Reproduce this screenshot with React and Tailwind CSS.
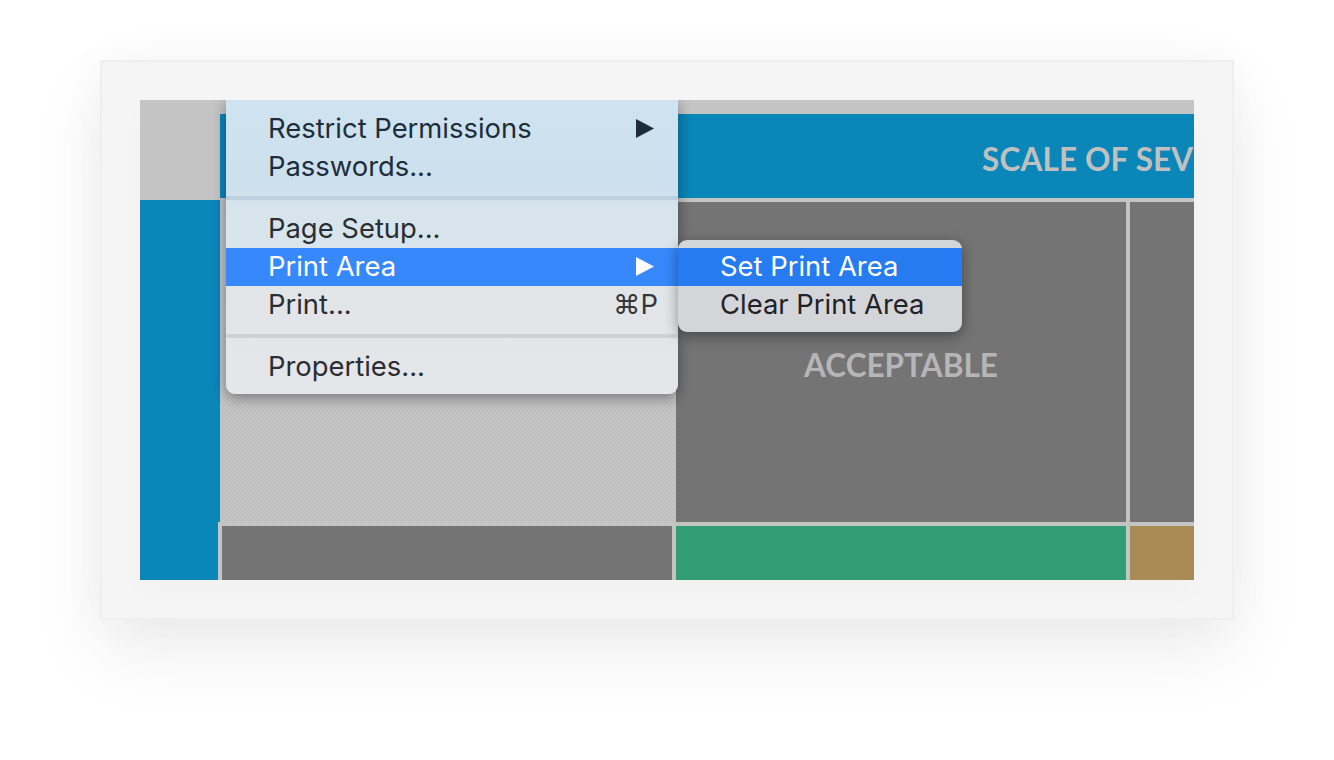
import React from 'react';

const MenuArrow = ({ className = 'text-[#1f2d3a]' }) => (
  <svg width="18" height="19" viewBox="0 0 18 19" className={className}>
    <path d="M0 0L18 9.5L0 19Z" fill="currentColor" />
  </svg>
);

const MenuRow = ({ label, arrow, shortcut, active, tone = 'pb-[2px]' }) => (
  <div className={`flex h-[38px] items-center justify-between pl-[42px] pr-[20px] ${active ? 'bg-[#3688fb] text-white' : ''} ${tone}`}>
    <span>{label}</span>
    {arrow && <span className="mr-[4px] flex"><MenuArrow className={active ? 'text-white' : 'text-[#1f2d3a]'} /></span>}
    {shortcut && <span className="text-[#33373b]">{shortcut}</span>}
  </div>
);

const App = () => {
  return (
    <div className="h-[760px] w-[1334px] overflow-hidden bg-white pl-[100px] pt-[60px] font-['Inter',sans-serif]">
      <div className="h-[560px] w-[1134px] border-2 border-[#efefef] bg-[#f5f5f5] pl-[38px] pt-[38px] shadow-[0_32px_70px_rgba(0,0,0,0.075),0_0_50px_rgba(0,0,0,0.03)]">
        <div className="relative flex h-[480px] w-[1054px] overflow-hidden bg-[#c4c4c4] font-['Lato',sans-serif] font-bold shadow-[0_12px_30px_rgba(0,0,0,0.02)]">
          <div className="flex w-[80px] shrink-0 flex-col">
            <div className="h-[100px] bg-[#c4c4c4]" />
            <div className="h-[322px] bg-[#0a86b9]" />
            <div className="h-[58px] w-[78px] bg-[#0a86b9]" />
          </div>

          <div className="flex min-w-0 flex-1 flex-col">
            <div className="h-[14px] shrink-0" />
            <div className="h-[84px] shrink-0 overflow-hidden whitespace-nowrap bg-[#0a86b9] pl-[762px] pt-[25px] text-[31.5px] leading-[40px] tracking-[0.15px] text-[#c0c0c0]">
              SCALE OF SEVERITY
            </div>

            <div className="flex h-[324px] shrink-0">
              <div className="mt-[2px] h-[322px] w-[456px] shrink-0 bg-[repeating-linear-gradient(45deg,#c9c9c9_0,#c9c9c9_1.414px,#bbbbbb_1.414px,#bbbbbb_2.828px)]" />
              <div className="mt-[4px] flex h-[320px] w-[450px] shrink-0 justify-center bg-[#747474] pt-[143px] text-[31.5px] leading-[40px] text-[#b6b6b6]">
                ACCEPTABLE
              </div>
              <div className="ml-[4px] mt-[4px] h-[320px] flex-1 bg-[#747474]" />
            </div>

            <div className="-ml-[2px] flex flex-1 gap-[4px] pl-[4px] pt-[4px]">
              <div className="w-[450px] bg-[#747474]" />
              <div className="w-[450px] bg-[#329c74]" />
              <div className="flex-1 bg-[#a98b55]" />
            </div>
          </div>

          <div className="absolute left-[86px] top-0 h-[294px] w-[452px] rounded-b-[9px] bg-[linear-gradient(180deg,#cee2ef_0%,#cce0ed_30%,#d7e4ec_36%,#d9e5ec_50%,#e2e5e8_65%,#e5e6e9_100%)] pt-[9px] font-['Inter',sans-serif] text-[27.4px] font-normal leading-[38px] text-[#2a2d31] shadow-[0_4px_14px_rgba(0,0,0,0.38)]">
            <MenuRow label="Restrict Permissions" arrow tone="text-[#1e2d3b]" />
            <MenuRow label="Passwords..." tone="text-[#1e2d3b]" />
            <div className="mb-[10px] mt-[11px] h-[4px] bg-[#bdd0dd]" />
            <MenuRow label="Page Setup..." />
            <MenuRow label="Print Area" arrow active />
            <MenuRow label="Print..." shortcut="⌘P" />
            <div className="mb-[10px] mt-[10px] h-[4px] bg-[#cfd1d4]" />
            <MenuRow label="Properties..." />

            <div className="absolute left-[452px] top-[140px] h-[92px] w-[284px] overflow-hidden rounded-[9px] bg-[#d4d5d8] pt-[8px] shadow-[0_4px_14px_rgba(0,0,0,0.38)]">
              <div className="flex h-[38px] items-center bg-[#267bf0] pb-[2px] pl-[42px] text-white">Set Print Area</div>
              <div className="flex h-[38px] items-center pb-[2px] pl-[42px] text-[#1f2226]">Clear Print Area</div>
            </div>
          </div>
        </div>
      </div>
    </div>
  );
};

export default App;
